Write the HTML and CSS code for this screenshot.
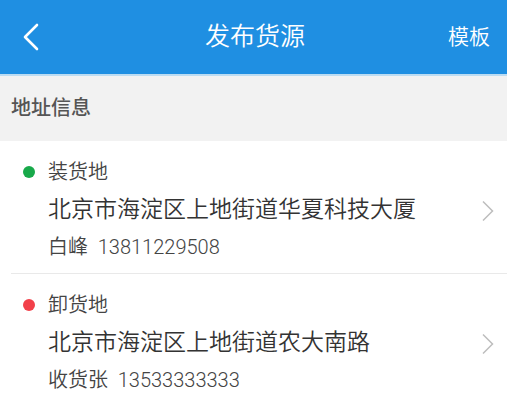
FILE: index.html
```html
<!DOCTYPE html>
<html lang="zh">
<head>
<meta charset="utf-8">
<link rel="stylesheet" href="styles.css">
</head>
<body>
<header class="topbar">
  <div class="back">
    <svg width="18" height="28" viewBox="0 0 18 28"><path d="M15 2 L3 14 L15 26" fill="none" stroke="#fff" stroke-width="2.6" stroke-linecap="round" stroke-linejoin="round"/></svg>
  </div>
  <div class="title">发布货源</div>
  <div class="action">模板</div>
</header>
<div class="section-title">地址信息</div>
<div class="list">
  <div class="item">
    <div class="info">
      <div class="label"><span class="dot green"></span>装货地</div>
      <div class="address">北京市海淀区上地街道华夏科技大厦</div>
      <div class="contact">白峰&nbsp;&nbsp;13811229508</div>
    </div>
    <svg class="chev" width="14" height="22" viewBox="0 0 14 22"><path d="M2 1.5 L11.5 11 L2 20.5" fill="none" stroke="#bdbdbd" stroke-width="1.5"/></svg>
  </div>
  <div class="item">
    <div class="info">
      <div class="label"><span class="dot red"></span>卸货地</div>
      <div class="address">北京市海淀区上地街道农大南路</div>
      <div class="contact">收货张&nbsp;&nbsp;13533333333</div>
    </div>
    <svg class="chev" width="14" height="22" viewBox="0 0 14 22"><path d="M2 1.5 L11.5 11 L2 20.5" fill="none" stroke="#bdbdbd" stroke-width="1.5"/></svg>
  </div>
</div>
</body>
</html>
```
FILE: styles.css
```css
html, body {
  margin: 0;
  padding: 0;
  background: #ffffff;
  font-family: Roboto, "Noto Sans CJK SC", sans-serif;
}
.topbar {
  height: 74px;
  background: #1f8fe2;
  border-bottom: 2px solid #bcdcf2;
  display: grid;
  grid-template-columns: 1fr auto 1fr;
  align-items: center;
  color: #ffffff;
}
.back {
  padding-left: 22px;
  display: flex;
  align-items: center;
  height: 28px;
}
.title {
  font-size: 25px;
  line-height: 34px;
  font-weight: 350;
  padding-left: 3px;
}
.action {
  justify-self: end;
  font-size: 21px;
  line-height: 30px;
  font-weight: 350;
  padding-right: 17px;
}
.section-title {
  background: #f2f2f2;
  height: 65px;
  line-height: 65px;
  padding-left: 11px;
  font-size: 20px;
  color: #555555;
  font-weight: 500;
}
.list {
  padding-left: 11px;
}
.item {
  display: flex;
  align-items: center;
  padding: 18px 0 14px;
  border-bottom: 1px solid #e9e9e9;
}
.item:last-child {
  border-bottom: none;
}
.info {
  flex: 1;
}
.label {
  display: flex;
  align-items: center;
  font-size: 20px;
  line-height: 26px;
  color: #444444;
  padding-left: 12px;
  font-weight: 350;
}
.dot {
  width: 12px;
  height: 12px;
  border-radius: 50%;
  margin-right: 13px;
}
.green { background: #18a94a; }
.red { background: #f2404a; }
.address {
  font-size: 23px;
  line-height: 50px;
  color: #333333;
  padding-left: 37px;
  font-weight: 350;
}
.contact {
  font-size: 20px;
  line-height: 24px;
  color: #444444;
  padding-left: 37px;
  font-weight: 350;
}
.chev {
  margin-right: 12px;
  margin-top: 4px;
}
```
